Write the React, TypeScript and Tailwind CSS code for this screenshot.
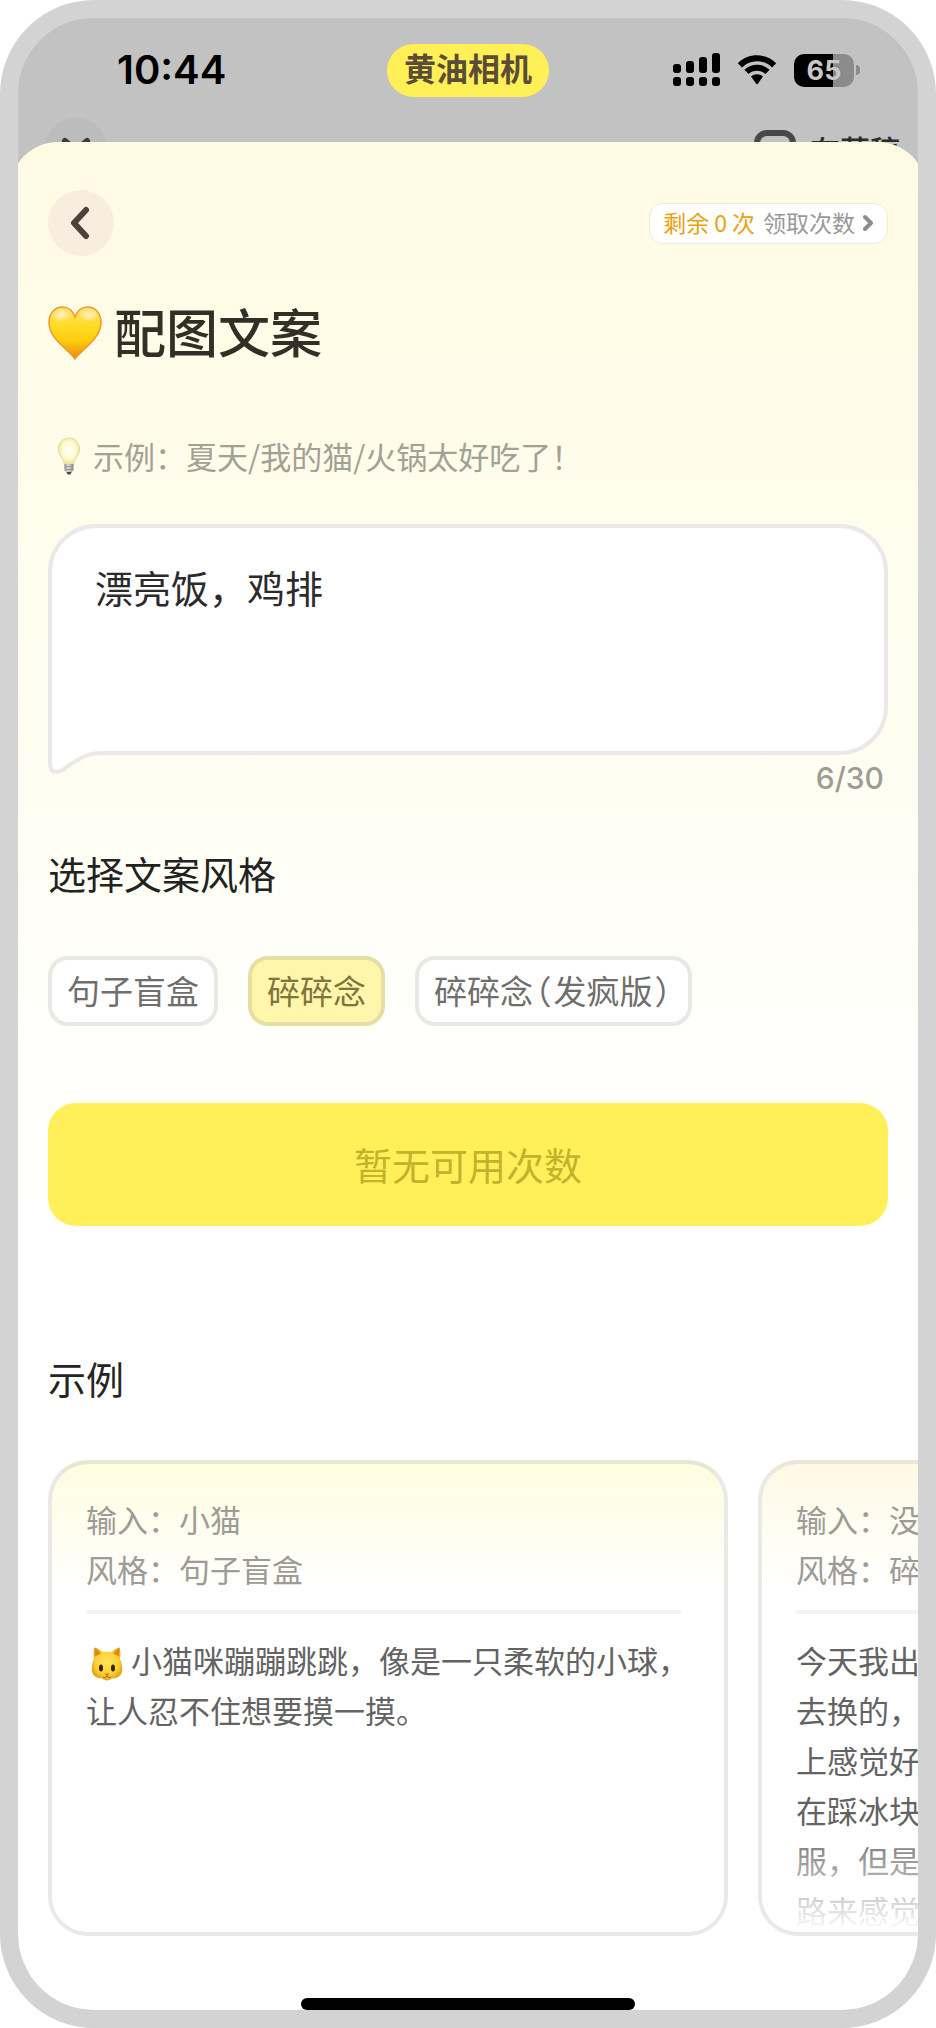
import { useState } from "react";

type Example = {
  input: string;
  style: string;
  lines: string[];
  cat?: boolean;
  warm?: boolean;
};

const MAX_LENGTH = 30;

const styleOptions = ["句子盲盒", "碎碎念", "碎碎念（发疯版）"];

const examples: Example[] = [
  {
    input: "小猫",
    style: "句子盲盒",
    lines: ["小猫咪蹦蹦跳跳，像是一只柔软的小球，", "让人忍不住想要摸一摸。"],
    cat: true,
  },
  {
    input: "没",
    style: "碎",
    lines: ["今天我出", "去换的，", "上感觉好", "在踩冰块", "服，但是", "路来感觉"],
    warm: true,
  },
];

const SignalIcon = () => (
  <svg width="47" height="34" viewBox="0 0 47 34" aria-hidden="true">
    {[11, 8, 4, 0].map((top, i) => (
      <g key={top}>
        <rect x={i * 13} y={top} width="8" height={20 - top} rx="3" />
        <rect x={i * 13} y="24" width="8" height="9" rx="3" />
      </g>
    ))}
  </svg>
);

const WifiIcon = () => (
  <svg width="40" height="30" viewBox="0 0 40 30" aria-hidden="true">
    <path d="M0.8 8.2C11.5-2.4 28.5-2.4 39.2 8.2L35 12.4C26.6 4.2 13.4 4.2 5 12.4Z" />
    <path d="M7.4 14.8C14.4 8 25.6 8 32.6 14.8L28.4 19C23.7 14.6 16.3 14.6 11.6 19Z" />
    <path d="M14 21.6C17.4 18.6 22.6 18.6 26 21.6L21 28.6Q20 29.8 19 28.6Z" />
  </svg>
);

const Battery = () => (
  <div className="flex items-center gap-[2px]">
    <div className="flex h-[33px] w-[60px] items-center justify-center rounded-[10px] bg-[linear-gradient(90deg,#000_65%,#8b8b8b_65%)] text-[27px] leading-none font-bold text-[#c8c8c8]">
      65
    </div>
    <div className="h-[10px] w-[4px] rounded-r-full bg-[#8b8b8b]" />
  </div>
);

const HeartIcon = () => (
  <svg width="54" height="54" viewBox="0 0 54 54" aria-hidden="true">
    <defs>
      <linearGradient id="heart" x1="0" y1="0" x2="0" y2="1">
        <stop offset="0" stopColor="#ffe078" />
        <stop offset="0.35" stopColor="#ffdc28" />
        <stop offset="0.65" stopColor="#fdcc10" />
        <stop offset="1" stopColor="#ee8812" />
      </linearGradient>
      <radialGradient id="heartShine">
        <stop offset="0" stopColor="#fff3c4" />
        <stop offset="1" stopColor="#fff3c4" stopOpacity="0" />
      </radialGradient>
    </defs>
    <path
      d="M27 53C22 44 1 34 1 16.500C1 7 7 1 14.500 1C20.500 1 25 5 27 11C29 5 33.500 1 39.500 1C47 1 53 7 53 16.500C53 34 32 44 27 53Z"
      fill="url(#heart)"
      stroke="#ef9a22"
      strokeWidth="1.500"
    />
    <ellipse cx="13" cy="9" rx="10" ry="7" fill="url(#heartShine)" />
    <ellipse cx="41" cy="9" rx="10" ry="7" fill="url(#heartShine)" />
  </svg>
);

const BulbIcon = () => (
  <svg width="24" height="38" viewBox="0 0 24 38" aria-hidden="true">
    <defs>
      <radialGradient id="bulb" cx="0.5" cy="0.45">
        <stop offset="0" stopColor="#fffffa" />
        <stop offset="0.65" stopColor="#fffbd2" />
        <stop offset="1" stopColor="#eee59a" />
      </radialGradient>
      <linearGradient id="bulbBase" x1="0" y1="0" x2="1" y2="0">
        <stop offset="0" stopColor="#8f8d8c" />
        <stop offset="0.4" stopColor="#e2e0df" />
        <stop offset="1" stopColor="#8b8584" />
      </linearGradient>
    </defs>
    <path
      d="M12 1C18 1 22.500 5.500 22.500 12C22.500 18 17.500 21 16.500 28H7.500C6.500 21 1.500 18 1.500 12C1.500 5.500 6 1 12 1Z"
      fill="url(#bulb)"
      stroke="#e6dd9c"
    />
    <path d="M7.500 27H16.500V33L14 36H10L7.500 33Z" fill="url(#bulbBase)" />
    <path d="M7.500 30L16.500 29M7.500 33L16.500 32" stroke="#9a9594" />
    <path d="M9.500 35H14.500L13.500 37.500H10.500Z" fill="#4b4745" />
  </svg>
);

const CatIcon = () => (
  <svg
    width="32"
    height="35"
    viewBox="0 0 32 35"
    className="mr-2 ml-[5px] inline-block align-[-8px]"
    aria-hidden="true"
  >
    <defs>
      <radialGradient id="cat" cx="0.5" cy="0.45" r="0.6">
        <stop offset="0" stopColor="#ffe356" />
        <stop offset="0.65" stopColor="#fbcf35" />
        <stop offset="1" stopColor="#d8960f" />
      </radialGradient>
    </defs>
    <path
      d="M3.500 1.500Q7 2 12 6Q16 5 20 6Q25 2 28.500 1.500Q30 6 29 13Q32 19 31 26Q29 32 21 32.500Q18 34.500 16 34.500Q14 34.500 11 32.500Q3 32 1 26Q0 19 3 13Q2 6 3.500 1.500Z"
      fill="url(#cat)"
    />
    <path d="M4 3Q8 4 10 7.500L4 10.500ZM28 3Q24 4 22 7.500L28 10.500Z" fill="#d98a17" />
    <ellipse cx="10" cy="22" rx="2" ry="3.500" fill="#3a2409" />
    <ellipse cx="22" cy="22" rx="2" ry="3.500" fill="#3a2409" />
    <path d="M13.500 27.500H18.500L16 30Z" fill="#d0642a" />
    <path d="M12 31Q14 32.500 16 30Q18 32.500 20 31" fill="none" stroke="#a8690c" />
  </svg>
);

const ExampleCard = ({ input, style, lines, cat, warm }: Example) => (
  <article
    className={`relative h-[476px] w-[680px] shrink-0 overflow-hidden rounded-[40px] border-4 border-[#e9e9e8] pt-[30px] pr-5 pl-[34px] text-[31px] leading-[50px] ${
      warm
        ? "border-t-[#ebe6da] bg-[linear-gradient(#fff8e4,#fffdf5_80px,#fff_130px)]"
        : "border-t-[#e7e7d6] bg-[linear-gradient(#fffee1,#fffdf2_80px,#fff_130px)]"
    }`}
  >
    <div className="text-[#9d9b95]">
      <p>输入：{input}</p>
      <p>风格：{style}</p>
    </div>
    <hr className="mt-4 mr-[22px] h-1 rounded-full border-0 bg-[#f3f3f3]" />
    <div className="mt-[21px] text-[#636363]">
      {lines.map((line, i) => (
        <p key={line}>
          {cat && i === 0 && <CatIcon />}
          {line}
        </p>
      ))}
    </div>
    <div className="absolute inset-x-0 bottom-0 h-[110px] bg-linear-to-b from-white/0 to-white" />
  </article>
);

const App = () => {
  const [text, setText] = useState("漂亮饭，鸡排");
  const [selectedStyle, setSelectedStyle] = useState("碎碎念");

  return (
    <div className="bg-white font-['Noto_Sans_CJK_SC',sans-serif]">
      <div className="overflow-hidden rounded-[94px] border-[18px] border-[#d3d3d3] bg-[#c2c2c2]">
        {/* Status bar */}
        <div className="grid h-[100px] grid-cols-[1fr_auto_1fr] items-center pt-1 font-['Inter','Noto_Sans_CJK_SC',sans-serif]">
          <span className="pl-[99px] text-[40px] leading-none font-semibold text-black">
            10:44
          </span>
          <span className="flex h-[53px] items-center rounded-full bg-[#fef056] px-[17px] text-[32px] leading-none font-bold text-[#5a4c36]">
            黄油相机
          </span>
          <div className="flex items-center justify-end gap-[17px] pr-[58px]">
            <SignalIcon />
            <WifiIcon />
            <Battery />
          </div>
        </div>

        {/* Editor toolbar behind the sheet */}
        <div className="flex h-[62px] items-center justify-between pr-[18px] pl-[27px]">
          <div className="flex size-[62px] items-center justify-center rounded-full bg-[#bcbcbc]">
            <svg width="32" height="28" viewBox="0 0 32 28" aria-hidden="true">
              <path
                d="M5 6L27 25M27 6L5 25"
                stroke="#3f3a36"
                strokeWidth="6"
                strokeLinecap="round"
              />
            </svg>
          </div>
          <div className="flex items-center gap-[14px] text-[30px] leading-none font-medium text-[#2c2c2c]">
            <div className="h-[38px] w-[42px] rounded-[13px] border-[6px] border-[#484848]" />
            存草稿
          </div>
        </div>

        {/* Sheet */}
        <main className="relative -mx-2 -mt-[38px] rounded-t-[48px] bg-[linear-gradient(#fffbe3,#fffcea_300px,#fffef1_600px,#fffffa_850px,#fff_1100px)] px-[38px] pt-12">
          <div className="flex items-center justify-between">
            <button
              aria-label="返回"
              className="flex size-[66px] items-center justify-center rounded-full bg-[#f7eedf]"
            >
              <svg width="20" height="34" viewBox="0 0 20 34" aria-hidden="true">
                <path
                  d="M15 4L3 17L15 30"
                  fill="none"
                  stroke="#4c423b"
                  strokeWidth="6"
                  strokeLinecap="round"
                  strokeLinejoin="round"
                />
              </svg>
            </button>
            <button className="flex h-[41px] items-center rounded-[14px] border border-[#f8e9d2] bg-white px-[13px] text-[23px] leading-none text-[#999]">
              <span className="flex gap-[5px] pb-[2px] text-[#e8a20e]">
                剩余<span>0</span>次
              </span>
              <span className="ml-2 pb-[2px]">领取次数</span>
              <svg
                width="11"
                height="18"
                viewBox="0 0 11 18"
                className="ml-2"
                aria-hidden="true"
              >
                <path
                  d="M2 3L8 9L2 15"
                  fill="none"
                  stroke="#8c8c8c"
                  strokeWidth="4"
                  strokeLinecap="round"
                  strokeLinejoin="round"
                />
              </svg>
            </button>
          </div>

          <h1 className="mt-[45px] flex items-center gap-3 text-[52px] leading-[60px] font-medium text-[#352e26]">
            <HeartIcon />
            <span className="pb-1">配图文案</span>
          </h1>

          <p className="mt-[71px] flex items-center gap-3 pl-[9px] text-[31px] leading-10 text-[#a3a194]">
            <BulbIcon />
            示例：夏天/我的猫/火锅太好吃了！
          </p>

          {/* Input bubble */}
          <div className="relative mt-12 h-[231px] rounded-[48px] rounded-bl-none border-4 border-[#ebe9e8] bg-white">
            <textarea
              aria-label="输入"
              value={text}
              maxLength={MAX_LENGTH}
              onChange={(e) => setText(e.target.value)}
              className="block h-full w-full resize-none rounded-[44px] bg-transparent px-[43px] pt-[34px] text-[38px] leading-[50px] text-[#2b2b2b] focus:outline-none"
            />
            <svg
              width="54"
              height="32"
              viewBox="0 0 54 32"
              className="absolute -bottom-[26px] -left-1"
              aria-hidden="true"
            >
              <path
                d="M2 0V19Q2 27 9 27C15 27 20 20 28 16C36 11 42 8 54 8V0Z"
                fill="#fff"
              />
              <path d="M0 10H2V22L10 32H0Z" fill="#fffef3" />
              <path d="M54 10C42 10 36 13 28 18C20 23 15 29 9 29V32H54Z" fill="#fffef3" />
              <path
                d="M2 0V19Q2 27 9 27C15 27 20 20 28 16C36 11 42 8 54 8"
                fill="none"
                stroke="#ebe9e8"
                strokeWidth="4"
              />
            </svg>
          </div>
          <p className="mt-2 pr-1 text-right font-['Inter',sans-serif] text-[30px] leading-[30px] font-medium text-[#9d9c92]">
            {text.length}/{MAX_LENGTH}
          </p>

          <h2 className="mt-14 text-[38px] leading-[48px] text-[#24221f]">
            选择文案风格
          </h2>
          <div className="mt-[59px] flex flex-wrap gap-[30px]">
            {styleOptions.map((option) => (
              <button
                key={option}
                aria-pressed={option === selectedStyle}
                onClick={() => setSelectedStyle(option)}
                className={`h-[70px] rounded-[20px] border-4 px-[15px] pb-[2px] text-[33px] leading-none [font-feature-settings:'halt'] ${
                  option === selectedStyle
                    ? "border-[#e6dfa4] bg-[#fff6ac] text-[#7e743c]"
                    : "border-[#e9e8e4] bg-white text-[#706e6c]"
                }`}
              >
                {option.split(/([（）])/).map((part, i) => (
                  <span key={i} className={/[（）]/.test(part) ? "px-[2px]" : ""}>
                    {part}
                  </span>
                ))}
              </button>
            ))}
          </div>

          <button
            disabled
            className="mt-[77px] h-[123px] w-full rounded-[28px] bg-[#fff05a] pb-[2px] text-[38px] leading-none text-[#c4b12c]"
          >
            暂无可用次数
          </button>

          <h2 className="mt-[128px] text-[38px] leading-[48px] text-[#242424]">
            示例
          </h2>
          <div className="-mr-[30px] mt-[58px] flex gap-[30px] overflow-hidden">
            {examples.map((example) => (
              <ExampleCard key={example.input} {...example} />
            ))}
          </div>

          <div className="mx-auto mt-[62px] h-3 w-[334px] rounded-full bg-black" />
        </main>
      </div>
    </div>
  );
};

export default App;
